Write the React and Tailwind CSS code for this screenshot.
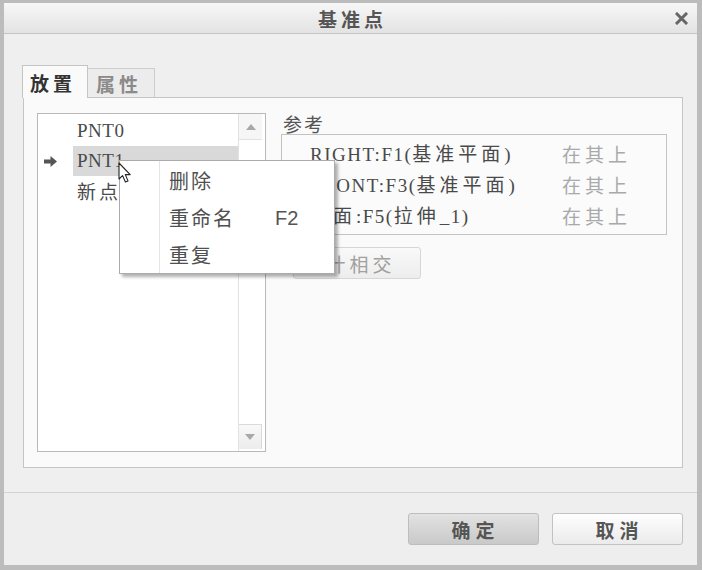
import React from "react";

const CJK = /([\u3000-\u9fff\uff00-\uffef]+)/;

// splits a label into latin (serif) and CJK runs so each gets its own metrics
const Mixed = ({ text, cjkClass = "tracking-[4px]", latinClass = "" }) => (
  <>
    {text.split(CJK).filter(Boolean).map((part, i) =>
      CJK.test(part) ? (
        <span key={i} className={`font-['Noto_Sans_CJK_SC',sans-serif] text-[19px] ${cjkClass}`}>{part}</span>
      ) : (
        <span key={i} className={`font-['Liberation_Serif',serif] text-[19px] ${latinClass}`}>{part}</span>
      )
    )}
  </>
);

const points = [
  { name: "PNT0" },
  { name: "PNT1", active: true },
  { name: "新点" },
];

const refs = [
  { name: "RIGHT:F1(基准平面)", kind: "在其上" },
  { name: "FRONT:F3(基准平面)", kind: "在其上" },
  { name: "曲面:F5(拉伸_1)", kind: "在其上" },
];

const menuItems = [
  { label: "删除" },
  { label: "重命名", key: "F2" },
  { label: "重复" },
];

const ArrowRight = () => (
  <svg width="13" height="11" viewBox="0 0 13 11">
    <path d="M0 3.5 H6.5 V0 L13 5.5 L6.5 11 V7.5 H0 Z" fill="#555" />
  </svg>
);

const Cursor = () => (
  <svg width="14" height="22" viewBox="0 0 14 22">
    <path
      d="M1 1 L1 17 L4.6 13.6 L7.4 20 L10 18.9 L7.3 12.6 L12.2 12.6 Z"
      fill="#fff"
      stroke="#222"
      strokeWidth="1.1"
      strokeLinejoin="round"
    />
  </svg>
);

const Triangle = ({ up }) => (
  <svg width="10" height="6" viewBox="0 0 10 6">
    <path d={up ? "M5 0 L10 6 H0 Z" : "M0 0 H10 L5 6 Z"} fill="#a8a8a8" />
  </svg>
);

export default function App() {
  return (
    <div className="relative w-[702px] h-[570px] bg-[#bcbcbc] pl-[4px] pt-[3px] pr-[5px] pb-[5px] text-[#555]">
      <div className="flex flex-col h-full bg-[#efefef]">
        {/* Title bar */}
        <div className="relative h-[31px] shrink-0 border-b border-[#c4c4c4] bg-gradient-to-b from-[#f7f7f7] to-[#e3e3e3] flex items-center justify-center">
          <span className="font-['Noto_Sans_CJK_SC',sans-serif] text-[19px] font-bold tracking-[4px] pl-[4px] text-[#555] leading-none">
            基准点
          </span>
          <svg className="absolute right-[9px] top-[9px]" width="13" height="13" viewBox="0 0 13 13">
            <path d="M2 2 L11 11 M11 2 L2 11" stroke="#666" strokeWidth="3" strokeLinecap="square" />
          </svg>
        </div>

        {/* Body */}
        <div className="flex-1 pt-[31px] pl-[18px] pr-[14px] pb-[24px] flex flex-col">
          {/* Tabs */}
          <div className="flex items-end h-[32px] relative z-10">
            <div className="w-[66px] h-[33px] -mb-px bg-[#fafafa] border-t border-l border-r border-[#c5c5c5] flex items-center pl-[7px]">
              <span className="font-['Noto_Sans_CJK_SC',sans-serif] text-[19px] font-bold tracking-[4px] text-[#333] leading-none">放置</span>
            </div>
            <div className="w-[67px] h-[29px] bg-[#ececec] border-t border-r border-[#cdcdcd] flex items-center pl-[8px]">
              <span className="font-['Noto_Sans_CJK_SC',sans-serif] text-[19px] font-bold tracking-[4px] text-[#8a8a8a] leading-none">属性</span>
            </div>
          </div>

          {/* Panel */}
          <div className="ml-[1px] h-[371px] bg-[#fafafa] border border-[#c5c5c5] pt-[15px] pl-[13px] flex gap-[15px]">
            {/* Point list */}
            <div className="w-[229px] h-[339px] bg-white border border-[#b9b9b9] flex pr-[3px]">
              <div className="flex-1 pt-[2px]">
                {points.map((p) => (
                  <div key={p.name} className="flex items-center h-[30px]">
                    <div className="w-[35px] h-full flex items-center pl-[6px]">
                      {p.active && <ArrowRight />}
                    </div>
                    <div className={`flex-1 h-full flex items-center pl-[4px] text-[#4a4a4a] ${p.active ? "bg-[#d9d9d9]" : ""}`}>
                      <Mixed text={p.name} cjkClass="tracking-[3px]" latinClass="tracking-[0.5px]" />
                    </div>
                  </div>
                ))}
              </div>
              <div className="w-[24px] flex flex-col border-l border-[#e2e2e2] pb-[2px]">
                <div className="h-[26px] bg-[#f6f6f6] border-b border-[#e2e2e2] flex items-center justify-center">
                  <Triangle up />
                </div>
                <div className="flex-1" />
                <div className="h-[25px] bg-gradient-to-b from-[#f8f8f8] to-[#ececec] border-t border-r border-[#dadada] flex items-center justify-center">
                  <Triangle />
                </div>
              </div>
            </div>

            {/* References */}
            <div className="w-[386px] flex flex-col">
              <div className="h-[21px] pl-[2px] flex items-center">
                <span className="font-['Noto_Sans_CJK_SC',sans-serif] text-[19px] text-[#555] leading-none tracking-[2px]">参考</span>
              </div>
              <div className="h-[101px] border border-[#c3c3c3] bg-[#fbfbfb] pt-[4px] pl-[28px]">
                {refs.map((r) => (
                  <div key={r.name} className="flex items-center h-[31px] text-[#4a4a4a]">
                    <div className="w-[252px] whitespace-nowrap">
                      <Mixed text={r.name} cjkClass="tracking-[4px]" latinClass="tracking-[1.5px]" />
                    </div>
                    <span className="font-['Noto_Sans_CJK_SC',sans-serif] text-[19px] tracking-[4px] text-[#a9a9a9]">{r.kind}</span>
                  </div>
                ))}
              </div>
              <div className="mt-[12px] ml-[12px] w-[128px] h-[32px] rounded-[3px] border border-[#d6d6d6] bg-gradient-to-b from-[#f9f9f9] to-[#ededed] flex items-center justify-center pl-[8px]">
                <span className="font-['Noto_Sans_CJK_SC',sans-serif] text-[19px] tracking-[4px] text-[#a0a0a0] leading-none">计相交</span>
              </div>
            </div>
          </div>
        </div>

        {/* Footer */}
        <div className="h-[73px] shrink-0 border-t border-[#d3d3d3] bg-[#eeeeee] pt-[20px] pr-[14px] flex justify-end gap-[13px]">
          <button className="w-[131px] h-[32px] rounded-[3px] border border-[#bdbdbd] bg-gradient-to-b from-[#e2e2e2] to-[#c9c9c9] flex items-center justify-center pl-[4px]">
            <span className="font-['Noto_Sans_CJK_SC',sans-serif] text-[19px] font-bold tracking-[5px] text-[#555] leading-none">确定</span>
          </button>
          <button className="w-[131px] h-[32px] rounded-[3px] border border-[#c2c2c2] bg-gradient-to-b from-[#fefefe] to-[#ebebeb] flex items-center justify-center pl-[4px]">
            <span className="font-['Noto_Sans_CJK_SC',sans-serif] text-[19px] font-bold tracking-[5px] text-[#555] leading-none">取消</span>
          </button>
        </div>
      </div>

      {/* Context menu */}
      <div className="absolute left-[119px] top-[160px] w-[216px] h-[114px] bg-white border border-[#ababab] shadow-[3px_3px_3px_rgba(0,0,0,0.3)] pt-[2px] flex flex-col">
        <div className="absolute left-[39px] top-0 bottom-0 w-px bg-[#e4e4e4]" />
        {menuItems.map((m) => (
          <div key={m.label} className="flex items-center h-[37px] pl-[49px]">
            <span className="w-[106px] font-['Noto_Sans_CJK_SC',sans-serif] text-[20px] tracking-[2px] text-[#505050] leading-none">{m.label}</span>
            {m.key && <span className="font-['Liberation_Sans',sans-serif] text-[20px] text-[#555] leading-none">{m.key}</span>}
          </div>
        ))}
      </div>

      {/* Mouse pointer */}
      <div className="absolute left-[118px] top-[162px]">
        <Cursor />
      </div>
    </div>
  );
}
